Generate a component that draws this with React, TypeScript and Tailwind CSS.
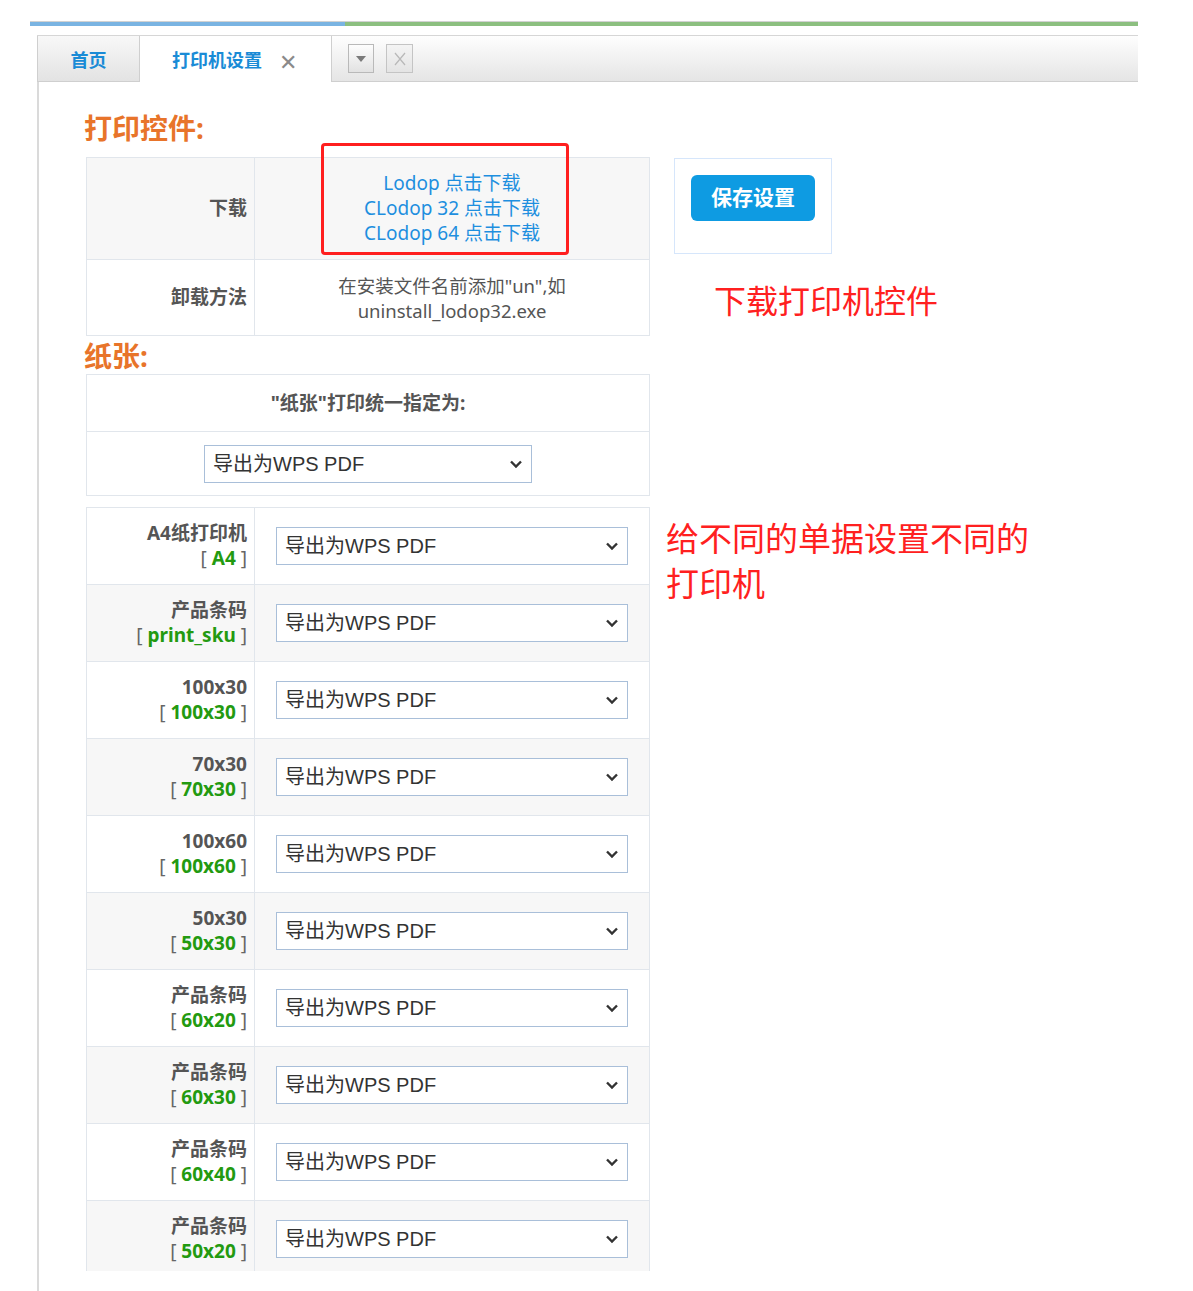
import React from 'react';

const PRINTERS = [
  { name: 'A4纸打印机', code: 'A4' },
  { name: '产品条码', code: 'print_sku' },
  { name: '100x30', code: '100x30' },
  { name: '70x30', code: '70x30' },
  { name: '100x60', code: '100x60' },
  { name: '50x30', code: '50x30' },
  { name: '产品条码', code: '60x20' },
  { name: '产品条码', code: '60x30' },
  { name: '产品条码', code: '60x40' },
  { name: '产品条码', code: '50x20' },
];

function PdfSelect({ className }: { className: string }) {
  return (
    <div className={`relative ${className}`}>
      <select
        defaultValue="wps"
        className="h-full w-full appearance-none rounded-none border border-[#a9bfd9] bg-white pl-[8px] font-['Liberation_Sans','Noto_Sans_CJK_SC',sans-serif] text-[20px] text-[#333] outline-none"
      >
        <option value="wps">导出为WPS PDF</option>
      </select>
      <svg
        className="pointer-events-none absolute right-[9px] top-1/2 -translate-y-1/2"
        width="14"
        height="9"
        viewBox="0 0 14 9"
      >
        <path d="M2 2l5 5 5-5" stroke="#333" strokeWidth="2.4" fill="none" />
      </svg>
    </div>
  );
}

export default function App() {
  return (
    <div className="relative h-[1291px] overflow-hidden bg-white font-['Noto_Sans','Noto_Sans_CJK_SC',sans-serif]">
      {/* top colour strip */}
      <div className="ml-[30px] mt-[21px] w-[1108px] border-t border-[#d2d2d2]">
        <div className="flex h-[4px]">
          <div className="w-[315px] bg-[#7ab4e2]" />
          <div className="flex-1 bg-[#8cbf80]" />
        </div>
      </div>

      {/* tabs */}
      <div className="ml-[37px] mt-[9px] flex h-[47px] w-[1101px] border-t border-[#d6d6d6]">
        <div className="flex w-[103px] items-center justify-center border-x border-b border-[#cfcfcf] bg-gradient-to-b from-[#f8f8f8] to-[#e3e3e3] pt-[3px] text-[18px] font-bold text-[#1a8bd6]">
          首页
        </div>
        <div className="flex w-[192px] items-center border-r border-[#cfcfcf] bg-white pl-[32px] pt-[3px] text-[18px] font-bold text-[#1a8bd6]">
          打印机设置
          <span className="ml-[17px] text-[22px] font-normal leading-none text-[#8a8a8a]">✕</span>
        </div>
        <div className="flex flex-1 items-center gap-[12px] border-b border-[#cfcfcf] bg-gradient-to-b from-[#fefefe] to-[#e5e5e5] pl-[16px]">
          <div className="flex h-[29px] w-[26px] items-center justify-center border border-[#b9b9b9] bg-gradient-to-b from-[#fdfdfd] to-[#e2e2e2]">
            <svg width="10" height="6" viewBox="0 0 10 6">
              <path d="M0 0h10L5 6z" fill="#7a7a7a" />
            </svg>
          </div>
          <div className="flex h-[29px] w-[27px] items-center justify-center border border-[#c4c4c4] bg-gradient-to-b from-[#f4f4f4] to-[#e4e4e4]">
            <svg width="12" height="14" viewBox="0 0 12 14">
              <path d="M1 1l10 12M11 1L1 13" stroke="#b8b8b8" strokeWidth="1.2" fill="none" />
            </svg>
          </div>
        </div>
      </div>

      {/* content */}
      <div className="relative ml-[37px] h-[1209px] border-l-2 border-[#dadada] pl-[47px] pt-[30px]">
        <h2 className="mb-[12px] ml-[-2px] text-[28px] font-bold leading-[33px] text-[#e8742a]">打印控件:</h2>

        <div className="flex items-start gap-[24px]">
          <table className="w-[564px] border-collapse">
            <tbody>
              <tr className="h-[102px] bg-[#f7f7f7]">
                <td className="w-[168px] border border-[#e1e6ec] pr-[7px] text-right text-[19px] font-bold text-[#555]">
                  下载
                </td>
                <td className="border border-[#e1e6ec] text-center text-[19px] leading-[25px] text-[#1e8fdf]">
                  <div>Lodop 点击下载</div>
                  <div>CLodop 32 点击下载</div>
                  <div>CLodop 64 点击下载</div>
                </td>
              </tr>
              <tr className="h-[76px]">
                <td className="border border-[#e1e6ec] pr-[7px] text-right text-[19px] font-bold text-[#555]">
                  卸载方法
                </td>
                <td className="border border-[#e1e6ec] text-center text-[18.5px] leading-[25px] text-[#555]">
                  <div>在安装文件名前添加"un",如</div>
                  <div>uninstall_lodop32.exe</div>
                </td>
              </tr>
            </tbody>
          </table>

          <div className="mt-[1px] h-[96px] w-[158px] border border-[#d6e6fb] pl-[16px] pt-[16px]">
            <button className="h-[46px] w-[124px] rounded-md bg-[#0e9be2] text-[21px] font-bold text-white">
              保存设置
            </button>
          </div>
        </div>

        <h2 className="ml-[-2px] mt-[2px] text-[28px] font-bold leading-[36px] text-[#e8742a]">纸张:</h2>

        <table className="w-[564px] border-collapse">
          <tbody>
            <tr className="h-[57px]">
              <td className="border border-[#e1e6ec] text-center text-[19px] font-bold text-[#555]">
                "纸张"打印统一指定为:
              </td>
            </tr>
            <tr className="h-[64px]">
              <td className="border border-[#e1e6ec]">
                <PdfSelect className="mx-auto h-[38px] w-[328px]" />
              </td>
            </tr>
          </tbody>
        </table>

        <div className="mt-[11px] h-[764px] w-[564px] overflow-hidden">
          <table className="w-[564px] border-collapse">
            <tbody>
              {PRINTERS.map((p, i) => (
                <tr key={i} className={`h-[77px] ${i % 2 === 1 ? 'bg-[#f7f7f7]' : 'bg-white'}`}>
                  <td className="w-[168px] border border-[#e1e6ec] pr-[7px] text-right text-[19px] leading-[25px]">
                    <div className="font-bold text-[#555]">{p.name}</div>
                    <div className="text-[#666]">
                      [ <span className="font-bold text-[#239a10]">{p.code}</span> ]
                    </div>
                  </td>
                  <td className="border border-[#e1e6ec] px-[21px]">
                    <PdfSelect className="h-[38px] w-full" />
                  </td>
                </tr>
              ))}
            </tbody>
          </table>
        </div>

        {/* annotations */}
        <div className="pointer-events-none absolute left-[282px] top-[61px] h-[112px] w-[248px] rounded-[4px] border-[3px] border-[#ff1f1f]" />
        <div className="absolute left-[675px] top-[199px] text-[32px] leading-[40px] text-[#ff2020]">
          下载打印机控件
        </div>
        <div className="absolute left-[627px] top-[434px] w-[400px] text-[33px] leading-[45px] text-[#ff2020]">
          给不同的单据设置不同的
          <br />
          打印机
        </div>
      </div>
    </div>
  );
}
